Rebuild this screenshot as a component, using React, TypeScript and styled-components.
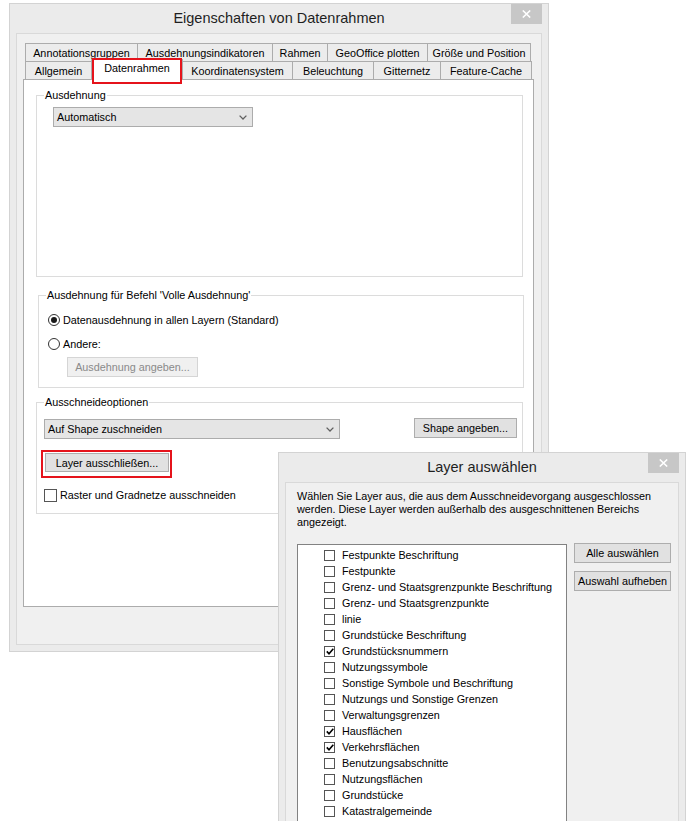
import React from 'react';
import styled, { createGlobalStyle } from 'styled-components';

const GlobalStyle = createGlobalStyle`
    html, body {
        margin: 0;
        padding: 0;
        background: #ffffff;
    }
    body {
        font-family: "Liberation Sans", Arial, sans-serif;
        font-size: 10.8px;
        color: #000;
    }
    * {
        box-sizing: border-box;
    }
`;

const Desktop = styled.div`
    position: relative;
    width: 695px;
    height: 821px;
    overflow: hidden;
    background: #fff;
`;

const Window = styled.div<{ $x: number; $y: number; $w: number; $h: number }>`
    position: absolute;
    left: ${(p) => p.$x}px;
    top: ${(p) => p.$y}px;
    width: ${(p) => p.$w}px;
    height: ${(p) => p.$h}px;
    display: flex;
    flex-direction: column;
    padding: 0 6px 6px;
    background: #ebebeb;
    border: 1px solid #d3d3d3;
`;

const TitleBar = styled.div`
    height: 29px;
    flex-shrink: 0;
    display: grid;
    grid-template-columns: 1fr auto 1fr;
    align-items: start;
`;

const Title = styled.div`
    grid-column: 2;
    line-height: 29px;
    font-size: 14.5px;
    color: #1f1f1f;
    white-space: nowrap;
`;

const CloseButton = styled.div`
    grid-column: 3;
    justify-self: end;
    width: 31px;
    height: 20px;
    background: #c7c7c7;
    display: flex;
    align-items: center;
    justify-content: center;

    & > svg {
        width: 9px;
        height: 8px;
    }
`;

const Client = styled.div<{ $pad: string }>`
    flex: 1;
    min-height: 0;
    background: #f0f0f0;
    border: 1px solid #d9d9d9;
    padding: ${(p) => p.$pad};
`;

const TabRow = styled.div`
    display: flex;
    height: 18px;
    padding-left: 2px;
`;

const Tab = styled.div<{ $w: number; $selected?: boolean }>`
    position: relative;
    width: ${(p) => p.$w + 1}px;
    height: ${(p) => (p.$selected ? 21 : 18)}px;
    margin-top: ${(p) => (p.$selected ? -2 : 0)}px;
    margin-right: -1px;
    padding-bottom: ${(p) => (p.$selected ? 4 : 0)}px;
    z-index: ${(p) => (p.$selected ? 2 : 1)};
    border: 1px solid #acacac;
    border-bottom: none;
    background: ${(p) => (p.$selected ? '#ffffff' : '#ececec')};
    display: flex;
    align-items: center;
    justify-content: center;
    white-space: nowrap;

    ${(p) =>
        p.$selected &&
        `
        &::after {
            content: '';
            position: absolute;
            top: -2px;
            left: 0;
            right: 0;
            bottom: -4px;
            border: 2px solid #e5131b;
        }
    `}
`;

const TabPanel = styled.div`
    height: 528px;
    background: #fff;
    border: 1px solid #acacac;
    padding: 0;
`;

const Group = styled.div<{ $mt: number; $ml: number; $w: number; $h: number }>`
    position: relative;
    margin: ${(p) => p.$mt}px 0 0 ${(p) => p.$ml}px;
    width: ${(p) => p.$w}px;
    height: ${(p) => p.$h}px;
    border: 1px solid #dcdcdc;
`;

const Legend = styled.span`
    position: absolute;
    top: -7px;
    left: 7px;
    padding: 0 1px;
    line-height: 13px;
    background: #fff;
    white-space: nowrap;
`;

const GroupBody = styled.div<{ $pad: string }>`
    padding: ${(p) => p.$pad};
    display: flex;
    flex-direction: column;
    align-items: flex-start;
`;

const Select = styled.div<{ $w: number }>`
    width: ${(p) => p.$w}px;
    height: 20px;
    display: flex;
    align-items: center;
    justify-content: space-between;
    padding: 0 5px 0 3px;
    background: #e5e5e5;
    border: 1px solid #acacac;

    & > svg {
        width: 8px;
        height: 5px;
    }
`;

const Button = styled.div<{ $w: number; $disabled?: boolean }>`
    width: ${(p) => p.$w}px;
    height: 20px;
    display: flex;
    align-items: center;
    justify-content: center;
    white-space: nowrap;
    background: ${(p) => (p.$disabled ? '#f0f0f0' : '#e1e1e1')};
    border: 1px solid ${(p) => (p.$disabled ? '#d5d5d5' : '#adadad')};
    color: ${(p) => (p.$disabled ? '#8a8a8a' : '#000')};
`;

const Highlight = styled.div`
    margin: 11px 0 0 -3px;
    padding: 1px 1px 4px 2px;
    border: 2px solid #e5131b;
`;

const OptionRow = styled.div<{ $mt?: number }>`
    display: flex;
    align-items: center;
    gap: 3px;
    height: 14px;
    margin-top: ${(p) => p.$mt ?? 0}px;
    white-space: nowrap;
`;

const Radio = styled.span<{ $checked?: boolean }>`
    width: 12px;
    height: 12px;
    border-radius: 50%;
    border: 1px solid #333;
    background: #fff;
    display: flex;
    align-items: center;
    justify-content: center;

    &::after {
        content: '';
        width: 6px;
        height: 6px;
        border-radius: 50%;
        background: ${(p) => (p.$checked ? '#1a1a1a' : 'transparent')};
    }
`;

const Check = styled.span<{ $size: number }>`
    width: ${(p) => p.$size}px;
    height: ${(p) => p.$size}px;
    flex-shrink: 0;
    border: 1px solid #555;
    background: #fff;
    display: flex;
    align-items: center;
    justify-content: center;

    & > svg {
        width: 8px;
        height: 7px;
    }
`;

const SpreadRow = styled.div`
    align-self: stretch;
    display: flex;
    justify-content: space-between;
    align-items: flex-start;

    & > :last-child {
        margin-top: -1px;
    }
`;

const Description = styled.div`
    line-height: 13px;
    white-space: nowrap;
`;

const PickerBody = styled.div`
    display: flex;
    gap: 7px;
    margin-top: 15px;
    align-items: flex-start;
`;

const ListBox = styled.div`
    width: 270px;
    height: 300px;
    padding-top: 2px;
    background: #fff;
    border: 1px solid #828282;
`;

const ListItem = styled.div`
    height: 16px;
    display: flex;
    align-items: center;
    gap: 7px;
    padding-left: 26px;
    white-space: nowrap;
`;

const ButtonColumn = styled.div`
    display: flex;
    flex-direction: column;
    gap: 8px;
    margin-top: -1px;
`;

const CloseIcon = () => (
    <svg viewBox="0 0 9 8" fill="none" stroke="#fff" strokeWidth="1.6">
        <path d="M0.8 0.5L8.2 7.5M8.2 0.5L0.8 7.5" />
    </svg>
);

const Chevron = () => (
    <svg viewBox="0 0 8 5" fill="none" stroke="#606060" strokeWidth="1.3">
        <path d="M0.6 0.6L4 4L7.4 0.6" />
    </svg>
);

const Tick = () => (
    <svg viewBox="0 0 8 7" fill="none" stroke="#000" strokeWidth="1.6">
        <path d="M0.8 3.4L3 5.8L7.3 0.8" />
    </svg>
);

const backTabs: [string, number][] = [
    ['Annotationsgruppen', 112],
    ['Ausdehnungsindikatoren', 135],
    ['Rahmen', 55],
    ['GeoOffice plotten', 100],
    ['Größe und Position', 103],
];

const frontTabs: [string, number][] = [
    ['Allgemein', 66],
    ['Datenrahmen', 91],
    ['Koordinatensystem', 110],
    ['Beleuchtung', 81],
    ['Gitternetz', 67],
    ['Feature-Cache', 91],
];

const layers: [string, boolean][] = [
    ['Festpunkte Beschriftung', false],
    ['Festpunkte', false],
    ['Grenz- und Staatsgrenzpunkte Beschriftung', false],
    ['Grenz- und Staatsgrenzpunkte', false],
    ['linie', false],
    ['Grundstücke Beschriftung', false],
    ['Grundstücksnummern', true],
    ['Nutzungssymbole', false],
    ['Sonstige Symbole und Beschriftung', false],
    ['Nutzungs und Sonstige Grenzen', false],
    ['Verwaltungsgrenzen', false],
    ['Hausflächen', true],
    ['Verkehrsflächen', true],
    ['Benutzungsabschnitte', false],
    ['Nutzungsflächen', false],
    ['Grundstücke', false],
    ['Katastralgemeinde', false],
];

export default function App() {
    return (
        <Desktop>
            <GlobalStyle />

            <Window $x={9} $y={3} $w={540} $h={649}>
                <TitleBar>
                    <Title>Eigenschaften von Datenrahmen</Title>
                    <CloseButton>
                        <CloseIcon />
                    </CloseButton>
                </TitleBar>
                <Client $pad="9px 7px 0 6px">
                    <TabRow>
                        {backTabs.map(([label, w]) => (
                            <Tab key={label} $w={w}>
                                {label}
                            </Tab>
                        ))}
                    </TabRow>
                    <TabRow>
                        {frontTabs.map(([label, w]) => (
                            <Tab key={label} $w={w} $selected={label === 'Datenrahmen'}>
                                {label}
                            </Tab>
                        ))}
                    </TabRow>
                    <TabPanel>
                        <Group $mt={15} $ml={12} $w={487} $h={182}>
                            <Legend>Ausdehnung</Legend>
                            <GroupBody $pad="11px 0 0 16px">
                                <Select $w={200}>
                                    Automatisch
                                    <Chevron />
                                </Select>
                            </GroupBody>
                        </Group>

                        <Group $mt={18} $ml={14} $w={486} $h={93}>
                            <Legend>Ausdehnung für Befehl 'Volle Ausdehnung'</Legend>
                            <GroupBody $pad="17px 0 0 9px">
                                <OptionRow>
                                    <Radio $checked />
                                    Datenausdehnung in allen Layern (Standard)
                                </OptionRow>
                                <OptionRow $mt={10}>
                                    <Radio />
                                    Andere:
                                </OptionRow>
                                <Button $w={131} $disabled style={{ marginTop: 6, marginLeft: 19 }}>
                                    Ausdehnung angeben...
                                </Button>
                            </GroupBody>
                        </Group>

                        <Group $mt={14} $ml={12} $w={487} $h={112}>
                            <Legend>Ausschneideoptionen</Legend>
                            <GroupBody $pad="16px 5px 0 7px">
                                <SpreadRow>
                                    <Select $w={296}>
                                        Auf Shape zuschneiden
                                        <Chevron />
                                    </Select>
                                    <Button $w={103}>Shape angeben...</Button>
                                </SpreadRow>
                                <Highlight>
                                    <Button $w={124} style={{ height: 19 }}>
                                        Layer ausschließen...
                                    </Button>
                                </Highlight>
                                <OptionRow $mt={10}>
                                    <Check $size={13} />
                                    Raster und Gradnetze ausschneiden
                                </OptionRow>
                            </GroupBody>
                        </Group>
                    </TabPanel>
                </Client>
            </Window>

            <Window $x={278} $y={452} $w={408} $h={420}>
                <TitleBar>
                    <Title>Layer auswählen</Title>
                    <CloseButton>
                        <CloseIcon />
                    </CloseButton>
                </TitleBar>
                <Client $pad="7px 0 0 11px">
                    <Description>
                        Wählen Sie Layer aus, die aus dem Ausschneidevorgang ausgeschlossen
                        <br />
                        werden. Diese Layer werden außerhalb des ausgeschnittenen Bereichs
                        <br />
                        angezeigt.
                    </Description>
                    <PickerBody>
                        <ListBox>
                            {layers.map(([name, checked]) => (
                                <ListItem key={name}>
                                    <Check $size={11}>{checked && <Tick />}</Check>
                                    {name}
                                </ListItem>
                            ))}
                        </ListBox>
                        <ButtonColumn>
                            <Button $w={97}>Alle auswählen</Button>
                            <Button $w={97}>Auswahl aufheben</Button>
                        </ButtonColumn>
                    </PickerBody>
                </Client>
            </Window>
        </Desktop>
    );
}
